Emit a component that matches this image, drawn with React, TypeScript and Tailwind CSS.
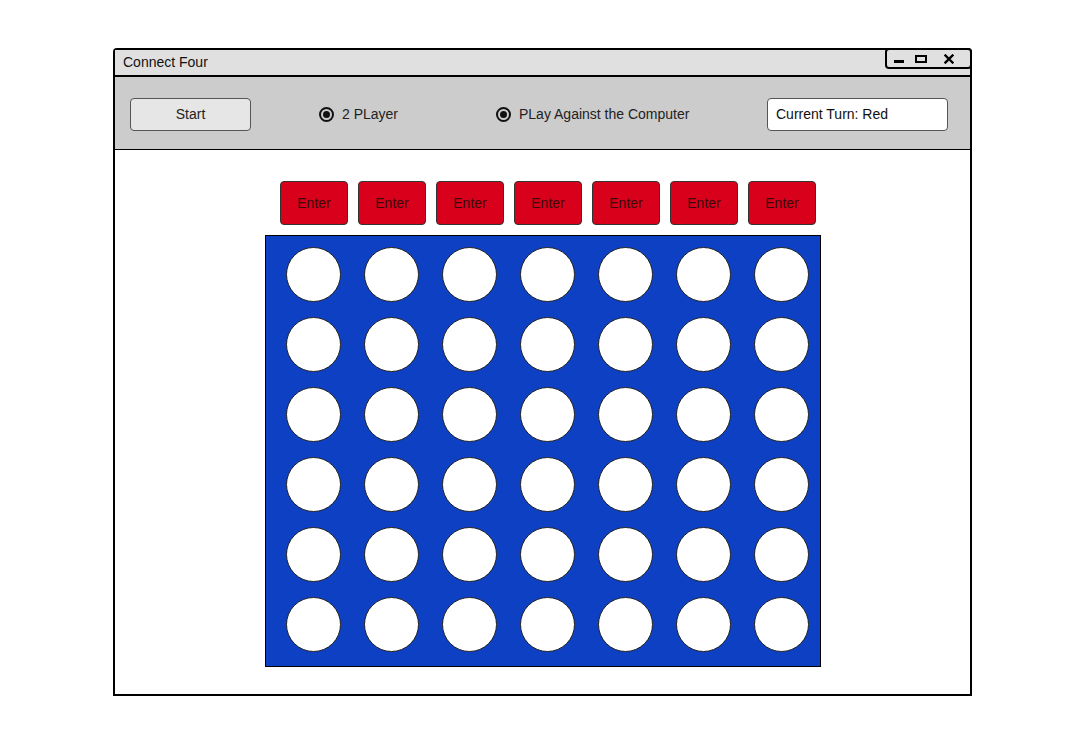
const ROWS = 6;
const COLS = 7;

function Radio({ label }: { label: string }) {
  return (
    <div className="flex items-center gap-[8px]">
      <span className="flex h-[15px] w-[15px] items-center justify-center rounded-full border-2 border-[#111]">
        <span className="h-[7px] w-[7px] rounded-full bg-[#111]" />
      </span>
      <span className="text-[14px] text-[#222]">{label}</span>
    </div>
  );
}

function WindowControls() {
  return (
    <div className="absolute right-[-2px] top-[-2px] flex h-[21px] w-[87px] items-center rounded-[4px] border-2 border-black bg-[#e0e0e0] pl-[7px]">
      {/* minimize */}
      <span className="mt-[6px] h-[3px] w-[10px] bg-black" />
      {/* maximize */}
      <span className="ml-[11px] h-[8px] w-[12px] border-2 border-black" />
      {/* close */}
      <svg className="ml-[17px]" width="10" height="10" viewBox="0 0 10 10">
        <path d="M1.5 1.5l7 7M8.5 1.5l-7 7" stroke="black" strokeWidth="2.4" strokeLinecap="square" />
      </svg>
    </div>
  );
}

export default function App() {
  return (
    <div className="h-[743px] w-[1089px] bg-white pl-[113px] pt-[48px] font-['Liberation_Sans',Arial,sans-serif]">
      <div className="relative flex h-[648px] w-[859px] flex-col rounded-t-[4px] border-2 border-black bg-white">
        <WindowControls />

        {/* title bar */}
        <div className="flex h-[25px] items-center bg-[#e0e0e0] pl-[8px] text-[14px] text-[#111]">
          Connect Four
        </div>

        {/* toolbar */}
        <div className="flex h-[74px] items-center border-t-2 border-t-black bg-[#cccccc] pl-[15px] pt-[2px]">
          <button className="h-[33px] w-[121px] rounded-[4px] border border-[#555] bg-[#e6e6e6] text-[14px] text-[#222]">
            Start
          </button>
          <div className="ml-[68px] w-[177px]">
            <Radio label="2 PLayer" />
          </div>
          <div className="w-[271px]">
            <Radio label="PLay Against the Computer" />
          </div>
          <div className="flex h-[33px] w-[181px] items-center rounded-[4px] border border-[#555] bg-white pl-[8px] text-[14px] text-[#111]">
            Current Turn: Red
          </div>
        </div>
        <div className="h-px bg-black" />

        {/* game area */}
        <div className="flex flex-1 flex-col pl-[150px] pt-[31px]">
          <div className="flex gap-[10px] pl-[15px]">
            {Array.from({ length: COLS }).map((_, i) => (
              <button
                key={i}
                className="h-[44px] w-[68px] rounded-[4px] border border-[#333] bg-[#d9001b] text-[14px] text-[#3a0a0a]"
              >
                Enter
              </button>
            ))}
          </div>

          <div className="mt-[10px] h-[432px] w-[556px] border border-black bg-[#0d40c3] pl-[20px] pt-[11px]">
            <div className="grid grid-cols-[repeat(7,55px)] gap-x-[23px] gap-y-[15px]">
              {Array.from({ length: ROWS * COLS }).map((_, i) => (
                <div key={i} className="h-[55px] w-[55px] rounded-full border border-[#222] bg-white" />
              ))}
            </div>
          </div>
        </div>
      </div>
    </div>
  );
}
